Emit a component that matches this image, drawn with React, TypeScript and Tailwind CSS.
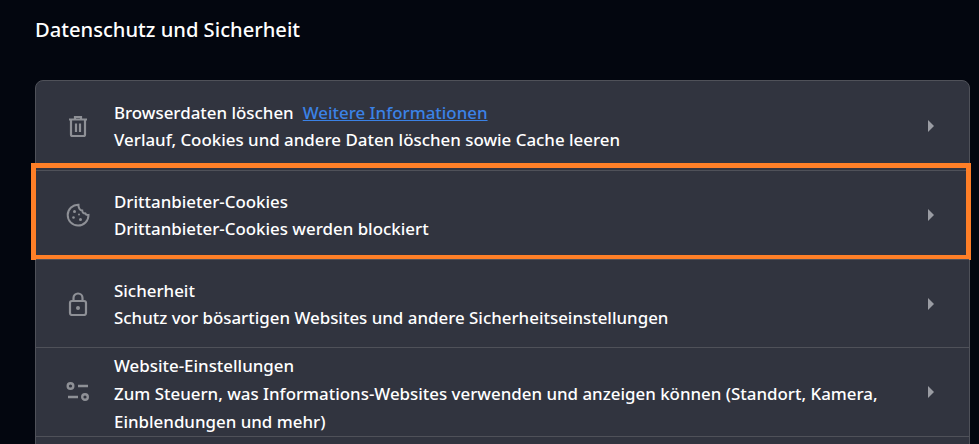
import React from "react";

const Chevron = () => (
  <svg width="8" height="14" viewBox="0 0 8 14" className="shrink-0">
    <path d="M1 1 L7 7 L1 13 Z" fill="#9a9ca3" />
  </svg>
);

const Trash = () => (
  <svg width="24" height="24" viewBox="0 0 24 24" fill="none" stroke="#8e9096" strokeWidth="2.2">
    <path d="M3 5.500h18M9 5.500V3h6v2.500" />
    <path d="M5 5.500v15a1.500 1.500 0 0 0 1.500 1.500h11a1.500 1.500 0 0 0 1.500-1.500v-15" />
    <path d="M10 9.500v8.500M14 9.500v8.500" />
  </svg>
);

const CookieIcon = () => (
  <svg width="24" height="24" viewBox="0 0 24 24" fill="none" stroke="#8e9096" strokeWidth="2">
    <path d="M12.500 1.700a10.400 10.400 0 1 0 10 10.300c-1.500.3-2.700-.2-3.200-1.600-1.700.2-3.100-1-3.100-2.800-2.300 0-4-2.900-3.700-5.900Z" />
    <circle cx="8.500" cy="8.500" r="1.500" fill="#8e9096" stroke="none" />
    <circle cx="7.500" cy="14.500" r="1.300" fill="#8e9096" stroke="none" />
    <circle cx="14.500" cy="16.500" r="1.500" fill="#8e9096" stroke="none" />
    <circle cx="13" cy="11.500" r="1" fill="#8e9096" stroke="none" />
  </svg>
);

const Lock = () => (
  <svg width="24" height="24" viewBox="0 0 24 24" fill="none" stroke="#8e9096" strokeWidth="2.200">
    <rect x="4" y="9" width="16" height="14" rx="2" />
    <path d="M7.500 9V6a4.500 4.500 0 0 1 9 0v3" />
    <circle cx="12" cy="16" r="2" fill="#8e9096" stroke="none" />
  </svg>
);

const Sliders = () => (
  <svg width="24" height="24" viewBox="0 0 24 24" fill="none" stroke="#8e9096" strokeWidth="2.400">
    <circle cx="4.500" cy="6" r="2.800" />
    <path d="M12 6h10M2 17h10" />
    <circle cx="19" cy="17" r="2.800" />
  </svg>
);

type RowProps = {
  icon: React.ReactNode;
  heightClass: string;
  textClass?: string;
  title: React.ReactNode;
  lines: string;
  first?: boolean;
  highlight?: boolean;
};

const Row = ({ icon, heightClass, textClass = "pt-[1px] leading-[27px]", title, lines, first, highlight }: RowProps) => (
  <div className={`relative flex items-center pl-[30px] pr-[34px] ${heightClass} ${first ? "" : "border-t border-[#4f5159]"}`}>
    <div className="w-[24px] h-[24px] flex items-center justify-center shrink-0">{icon}</div>
    <div className={`ml-[24px] flex-1 text-[16.900px] font-medium text-white ${textClass}`}>
      <div>{title}</div>
      <div>{lines}</div>
    </div>
    <Chevron />
    {highlight && (
      <div className="absolute left-[-5px] right-[-2px] top-[-8px] bottom-[-1px] border-[5px] border-[#ff7f27] pointer-events-none" />
    )}
  </div>
);

export default function App() {
  return (
    <div className="w-[979px] h-[444px] overflow-hidden bg-[#03060f] font-['Noto_Sans',sans-serif]">
      <div className="pl-[35px] pt-[16px] h-[80px] text-[20.150px] leading-[26px] font-medium text-white">
        Datenschutz und Sicherheit
      </div>
      <div className="ml-[35px] w-[935px] border border-[#4f5159] rounded-t-[8px] bg-[#31343f]">
        <Row
          first
          icon={<Trash />}
          heightClass="h-[89px]"
          title={
            <>
              Browserdaten löschen
              <a className="ml-[9px] text-[#3b82e6] underline">Weitere Informationen</a>
            </>
          }
          lines="Verlauf, Cookies und andere Daten löschen sowie Cache leeren"
        />
        <Row
          highlight
          icon={<CookieIcon />}
          heightClass="h-[89px]"
          textClass="pb-[1px] leading-[27px]"
          title="Drittanbieter-Cookies"
          lines="Drittanbieter-Cookies werden blockiert"
        />
        <Row
          icon={<Lock />}
          heightClass="h-[88px]"
          title="Sicherheit"
          lines="Schutz vor bösartigen Websites und andere Sicherheitseinstellungen"
        />
        <Row
          icon={<Sliders />}
          heightClass="h-[89px]"
          textClass="pt-[3px] leading-[28px]"
          title="Website-Einstellungen"
          lines="Zum Steuern, was Informations-Websites verwenden und anzeigen können (Standort, Kamera, Einblendungen und mehr)"
        />
        <div className="h-[20px] border-t border-[#4f5159]" />
      </div>
    </div>
  );
}
